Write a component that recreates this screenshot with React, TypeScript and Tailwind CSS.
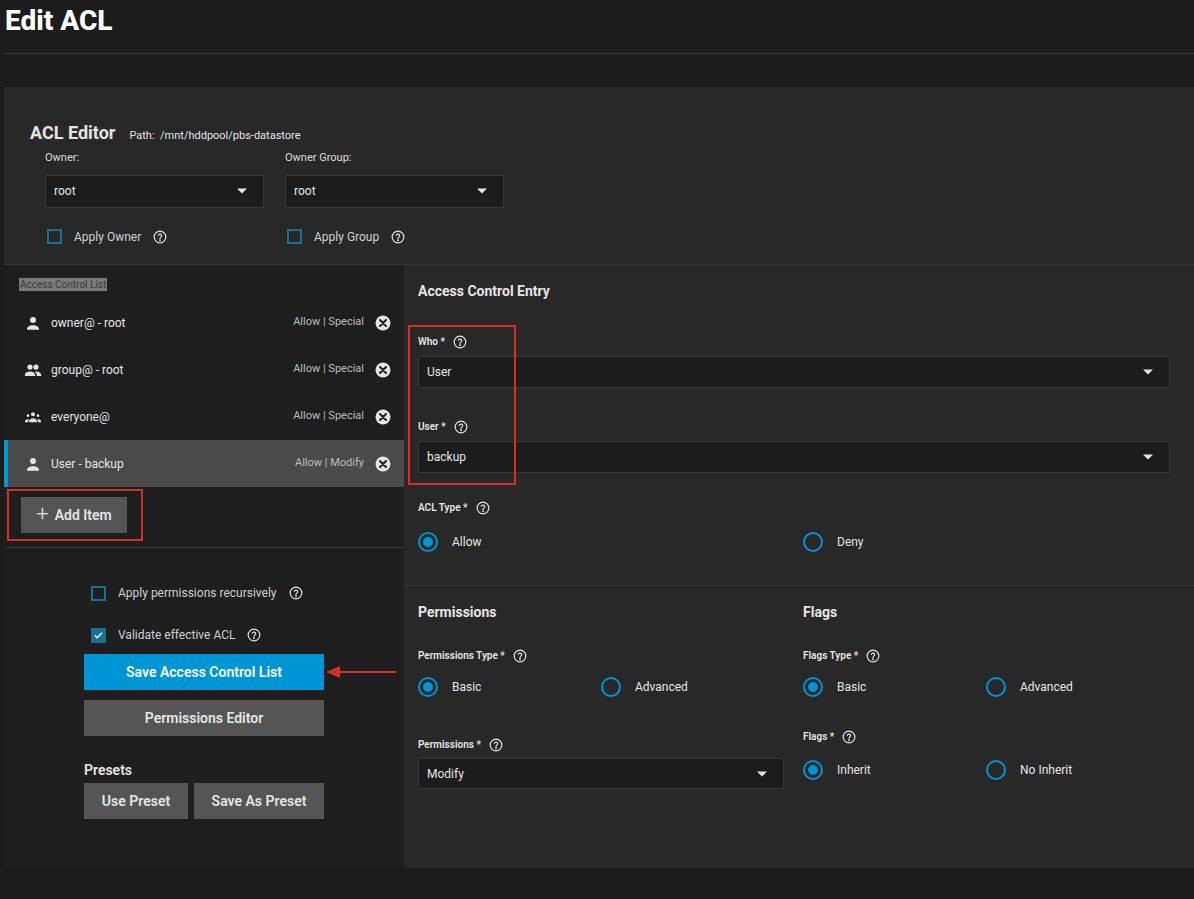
import React from "react";

const Help = () => (
  <svg width="14" height="14" viewBox="0 0 24 24" fill="none" stroke="#e5e5e5" strokeWidth="2" className="shrink-0">
    <circle cx="12" cy="12" r="10" />
    <path d="M9.1 9a3 3 0 0 1 5.8 1c0 2-3 2.5-3 4.5" strokeLinecap="round" />
    <circle cx="12" cy="17.5" r="0.6" fill="#e5e5e5" />
  </svg>
);

const Caret = () => (
  <svg width="10" height="6" viewBox="0 0 10 5"><path d="M0 0h10L5 5z" fill="#e5e5e5" /></svg>
);

const Select = ({ value, className = "" }: { value: string; className?: string }) => (
  <div className={`flex items-center justify-between bg-[#1c1c1c] border border-[#363636] px-2 text-[12px] text-[#e5e5e5] ${className}`}>
    <span>{value}</span>
    <span className="mr-2"><Caret /></span>
  </div>
);

const Radio = ({ on, label }: { on?: boolean; label: string }) => (
  <div className="flex items-center gap-[14px]">
    <div className="w-[20px] h-[20px] rounded-full border-2 border-[#0095d5] flex items-center justify-center">
      {on && <div className="w-[10px] h-[10px] rounded-full bg-[#0095d5]" />}
    </div>
    <span className="text-[12px] text-[#e5e5e5]">{label}</span>
  </div>
);

const Check = ({ on, label }: { on?: boolean; label: string }) => (
  <div className="flex items-center gap-[12px]">
    <div className={`w-[15px] h-[15px] border-2 border-[#1b6f92] flex items-center justify-center ${on ? "bg-[#1b6f92]" : ""}`}>
      {on && (
        <svg width="11" height="11" viewBox="0 0 24 24" fill="none" stroke="#fff" strokeWidth="3"><path d="M4 12l5 5L20 6" /></svg>
      )}
    </div>
    <span className="text-[12px] text-[#cfcfcf]">{label}</span>
    <Help />
  </div>
);

const Label = ({ text }: { text: string }) => (
  <div className="flex items-center gap-[8px] text-[10px] text-[#e5e5e5] font-semibold">
    <span>{text} *</span>
    <Help />
  </div>
);

const Person = () => (
  <svg width="18" height="18" viewBox="0 0 24 24" fill="#e5e5e5"><circle cx="12" cy="8" r="4" /><path d="M4 20c0-3 4-5 8-5s8 2 8 5v1H4z" /></svg>
);
const Group = () => (
  <svg width="20" height="18" viewBox="0 0 24 24" fill="#e5e5e5"><circle cx="8" cy="8" r="3.5" /><circle cx="16" cy="8" r="3.5" /><path d="M1 19c0-3 3-5 7-5s7 2 7 5v1H1z" /><path d="M14 14.3c1-.2 1.6-.3 2-.3 4 0 7 2 7 5v1h-6v-1c0-2-1-3.5-3-4.7z" /></svg>
);
const Everyone = () => (
  <svg width="20" height="16" viewBox="0 0 24 24" fill="#e5e5e5"><circle cx="12" cy="8" r="3" /><circle cx="4.5" cy="10" r="2" /><circle cx="19.5" cy="10" r="2" /><path d="M6 19c0-3 3-5 6-5s6 2 6 5v1H6z" /><path d="M0 20v-1.5c0-1.5 1.5-3 4-3 .8 0 1.3.1 1.7.3-.6.8-1 2-1 3.2V20z" /><path d="M24 20v-1.5c0-1.5-1.5-3-4-3-.8 0-1.3.1-1.7.3.6.8 1 2 1 3.2V20z" /></svg>
);
const XCircle = () => (
  <svg width="18" height="18" viewBox="0 0 24 24"><circle cx="12" cy="12" r="10" fill="#e5e5e5" /><path d="M8 8l8 8M16 8l-8 8" stroke="#1e1e1e" strokeWidth="2.6" strokeLinecap="round" /></svg>
);

const Row = ({ icon, name, perm, sel }: { icon: React.ReactNode; name: string; perm: string; sel?: boolean }) => (
  <div className={`h-[47px] flex items-center pr-[12px] ${sel ? "bg-[#4a4a4a] border-l-[4px] border-[#0095d5] pl-[14px]" : "pl-[18px]"}`}>
    <div className="w-[22px] flex justify-center">{icon}</div>
    <span className="ml-[7px] text-[12px] text-[#e5e5e5] flex-1">{name}</span>
    <span className="text-[11px] text-[#bdbdbd] mr-[10px]">{perm}</span>
    <XCircle />
  </div>
);

export default function App() {
  return (
    <div className="w-[1194px] h-[899px] bg-[#1c1c1c] overflow-hidden flex flex-col" style={{ fontFamily: "Roboto, 'Liberation Sans', sans-serif" }}>
      <div className="h-[54px] border-b border-[#3a3a3a] ml-[4px] flex items-start">
        <h1 className="text-[28px] font-extrabold text-white leading-none mt-[7px] ml-[1px]">Edit ACL</h1>
      </div>
      <div className="mt-[33px] ml-[4px] bg-[#282828] flex flex-col h-[781px]">
        <div className="h-[178px] border-b border-[#353535] pl-[26px] pt-[32px]">
          <div className="flex items-baseline gap-[14px]">
            <span className="text-[18px] font-bold text-[#e5e5e5]">ACL Editor</span>
            <span className="text-[11px] text-[#e5e5e5]">Path:&nbsp; /mnt/hddpool/pbs-datastore</span>
          </div>
          <div className="flex gap-[21px] ml-[15px] mt-[4px]">
            {[["Owner:", "Apply Owner"], ["Owner Group:", "Apply Group"]].map(([l, c]) => (
              <div key={l} className="w-[219px]">
                <div className="text-[11px] text-[#dcdcdc] mb-[8px]">{l}</div>
                <Select value="root" className="h-[33px]" />
                <div className="mt-[20px] ml-[2px]"><Check label={c} /></div>
              </div>
            ))}
          </div>
        </div>
        <div className="flex flex-1">
          <div className="w-[400px] bg-[#1e1e1e] flex flex-col">
            <div className="h-[34px] pl-[15px] pt-[6px]">
              <span className="text-[10px] text-[#3a3a3a] bg-[#7a7a7a] px-[1px] py-[1px]">Access Control List</span>
            </div>
            <Row icon={<Person />} name="owner@ - root" perm="Allow | Special" />
            <Row icon={<Group />} name="group@ - root" perm="Allow | Special" />
            <Row icon={<Everyone />} name="everyone@" perm="Allow | Special" />
            <Row icon={<Person />} name="User - backup" perm="Allow | Modify" sel />
            <div className="h-[61px] border-b border-[#353535] pl-[3px] pt-[2px]">
              <div className="w-[136px] h-[52px] border-2 border-[#d32f2f] flex items-center pl-[12px]">
                <div className="w-[106px] h-[36px] bg-[#555555] flex items-center justify-center gap-[6px] text-[14px] font-semibold text-[#e5e5e5]">
                  <span className="text-[22px] font-light leading-none -mt-[2px]">+</span>Add Item
                </div>
              </div>
            </div>
            <div className="pl-[80px] pt-[36px] flex flex-col">
              <div className="ml-[7px]"><Check label="Apply permissions recursively" /></div>
              <div className="ml-[7px] mt-[24px]"><Check on label="Validate effective ACL" /></div>
              <div className="relative mt-[10px] w-[240px] h-[36px] bg-[#0095d5] flex items-center justify-center text-[14px] font-semibold text-white">
                Save Access Control List
                <svg className="absolute left-[242px] top-[10px]" width="72" height="16" viewBox="0 0 72 16">
                  <path d="M14 8H70" stroke="#d32f2f" strokeWidth="2" />
                  <path d="M0 8L14 2V14z" fill="#d32f2f" />
                </svg>
              </div>
              <div className="mt-[10px] w-[240px] h-[36px] bg-[#555555] flex items-center justify-center text-[14px] font-semibold text-[#e5e5e5]">Permissions Editor</div>
              <div className="mt-[24px] text-[14px] font-semibold text-[#e5e5e5]">Presets</div>
              <div className="mt-[2px] flex gap-[6px]">
                <div className="w-[104px] h-[36px] bg-[#555555] flex items-center justify-center text-[14px] font-semibold text-[#e5e5e5]">Use Preset</div>
                <div className="w-[130px] h-[36px] bg-[#555555] flex items-center justify-center text-[14px] font-semibold text-[#e5e5e5]">Save As Preset</div>
              </div>
            </div>
          </div>
          <div className="flex-1 flex flex-col">
            <div className="h-[321px] border-b border-[#353535] pl-[14px] pr-[24px] pt-[16px]">
              <div className="text-[14px] font-bold text-[#e5e5e5]">Access Control Entry</div>
              <div className="relative mt-[32px]">
                <div className="absolute -left-[10px] -top-[9px] w-[108px] h-[160px] border-2 border-[#d32f2f]" />
                <Label text="Who" />
                <Select value="User" className="h-[32px] mt-[7px]" />
                <div className="mt-[31px]"><Label text="User" /></div>
                <Select value="backup" className="h-[32px] mt-[7px]" />
              </div>
              <div className="mt-[27px]"><Label text="ACL Type" /></div>
              <div className="mt-[17px] flex">
                <div className="w-[385px]"><Radio on label="Allow" /></div>
                <Radio label="Deny" />
              </div>
            </div>
            <div className="flex pl-[14px] pt-[16px]">
              <div className="w-[385px]">
                <div className="text-[14px] font-bold text-[#e5e5e5]">Permissions</div>
                <div className="mt-[25px]"><Label text="Permissions Type" /></div>
                <div className="mt-[14px] flex">
                  <div className="w-[183px]"><Radio on label="Basic" /></div>
                  <Radio label="Advanced" />
                </div>
                <div className="mt-[40px]"><Label text="Permissions" /></div>
                <Select value="Modify" className="h-[31px] mt-[6px] w-[366px]" />
              </div>
              <div className="flex-1">
                <div className="text-[14px] font-bold text-[#e5e5e5]">Flags</div>
                <div className="mt-[25px]"><Label text="Flags Type" /></div>
                <div className="mt-[14px] flex">
                  <div className="w-[183px]"><Radio on label="Basic" /></div>
                  <Radio label="Advanced" />
                </div>
                <div className="mt-[32px]"><Label text="Flags" /></div>
                <div className="mt-[16px] flex">
                  <div className="w-[183px]"><Radio on label="Inherit" /></div>
                  <Radio label="No Inherit" />
                </div>
              </div>
            </div>
          </div>
        </div>
      </div>
    </div>
  );
}
